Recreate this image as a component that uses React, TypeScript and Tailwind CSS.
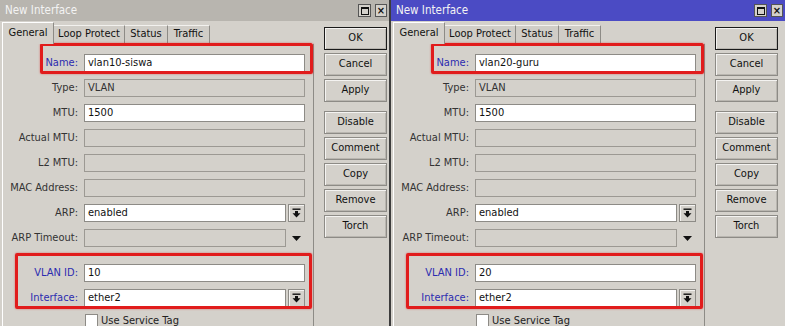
import React from 'react';

type Props = { active: boolean; name: string; vlan: string; className?: string };

const DropIcon = () => (
  <svg width="9" height="10" viewBox="0 0 9 10" aria-hidden="true">
    <rect x="0.5" y="0.5" width="8" height="1.4" fill="#111" />
    <path d="M3 3h3v2.2h2.5L4.5 9.5 0.5 5.2H3z" fill="#111" />
  </svg>
);

const Label: React.FC<{ text: string; blue?: boolean }> = ({ text, blue }) => (
  <div className={`w-[75px] shrink-0 text-right text-[11px] leading-[18px] ${blue ? 'text-[#2c2cb0]' : 'text-[#333333]'}`}>
    {text}
  </div>
);

const Box: React.FC<{ value?: string; disabled?: boolean; wide?: boolean }> = ({ value, disabled, wide }) => (
  <div
    className={`h-[18px] ${wide ? 'w-[221px]' : 'w-[202px]'} border px-[3px] text-[11px] leading-[16px] ${
      disabled ? 'border-[#9c9993] bg-[#d4d1cb] text-[#333333]' : 'border-[#8d8b86] bg-white text-[#111111]'
    }`}
  >
    {value}
  </div>
);

const DropBtn = () => (
  <div className="ml-[2px] flex h-[18px] w-[17px] items-center justify-center border border-[#8d8b86] bg-[#d4d1cb] shadow-[inset_1px_1px_0_#f4f3f1]">
    <DropIcon />
  </div>
);

const Row: React.FC<{ label: string; blue?: boolean; children: React.ReactNode; className?: string }> = ({
  label,
  blue,
  children,
  className = '',
}) => (
  <div className={`flex h-[18px] items-center ${className}`}>
    <Label text={label} blue={blue} />
    <div className="ml-[6px] flex items-center">{children}</div>
  </div>
);

const buttons = ['OK', 'Cancel', 'Apply', 'Disable', 'Comment', 'Copy', 'Remove', 'Torch'];

const Window: React.FC<Props> = ({ active, name, vlan, className = '' }) => (
  <div className={`relative h-[326px] shrink-0 overflow-hidden bg-[#d4d1cb] font-['DejaVu_Sans_Condensed','DejaVu_Sans',sans-serif] ${className}`}>
    {/* title bar */}
    <div className={`flex h-[21px] items-center justify-between pl-[5px] pr-[2px] ${active ? 'bg-[#4b4bc4]' : 'bg-[#b8b5af]'}`}>
      <span className="text-[11.5px] leading-[21px] text-[#f3f3f3]">New Interface</span>
      <div className="flex gap-[4px]">
        <div className="flex h-[13px] w-[13px] items-center justify-center border border-[#555] bg-[#d4d1cb]">
          <div className="h-[8px] w-[8px] border border-[#111] border-t-2" />
        </div>
        <div className="flex h-[13px] w-[12px] items-center justify-center border border-[#555] bg-[#d4d1cb] text-[11px] font-bold leading-none text-[#111]">
          ×
        </div>
      </div>
    </div>

    <div className="flex">
      <div className="ml-[2px] w-[312px]">
        {/* tabs */}
        <div className="mt-px flex h-[21px] items-end text-[11px] text-[#111]">
          <div className="relative z-10 -mb-px flex h-[22px] w-[52px] items-center justify-center border-l border-t border-r border-l-white border-t-white border-r-[#8d8b86] bg-[#d4d1cb]">
            General
          </div>
          <div className="flex h-[18px] w-[71px] items-center justify-center border-t border-r border-t-[#f2f1ee] border-r-[#8d8b86] bg-[#d0cdc7]">
            Loop Protect
          </div>
          <div className="flex h-[18px] w-[43px] items-center justify-center border-t border-r border-t-[#f2f1ee] border-r-[#8d8b86] bg-[#d0cdc7]">
            Status
          </div>
          <div className="flex h-[18px] w-[42px] items-center justify-center border-t border-r border-t-[#f2f1ee] border-r-[#8d8b86] bg-[#d0cdc7]">
            Traffic
          </div>
        </div>
        {/* panel */}
        <div className="h-[300px] border-l border-t border-r border-l-white border-t-white border-r-[#8d8b86] pt-[10px]">
          <div className="flex flex-col gap-[7px]">
            <Row label="Name:" blue>
              <Box value={name} wide />
            </Row>
            <Row label="Type:">
              <Box value="VLAN" disabled wide />
            </Row>
            <Row label="MTU:">
              <Box value="1500" wide />
            </Row>
            <Row label="Actual MTU:">
              <Box disabled wide />
            </Row>
            <Row label="L2 MTU:">
              <Box disabled wide />
            </Row>
            <Row label="MAC Address:">
              <Box disabled wide />
            </Row>
            <Row label="ARP:">
              <Box value="enabled" />
              <DropBtn />
            </Row>
            <Row label="ARP Timeout:">
              <Box disabled />
              <svg width="17" height="18" viewBox="0 0 17 18" className="ml-[2px]" aria-hidden="true">
                <path d="M4 7h9l-4.5 5z" fill="#111" />
              </svg>
            </Row>
            <Row label="VLAN ID:" blue className="mt-[10px]">
              <Box value={vlan} wide />
            </Row>
            <Row label="Interface:" blue>
              <Box value="ether2" />
              <DropBtn />
            </Row>
            <div className="ml-[82px] flex items-center">
              <div className="h-[13px] w-[13px] border border-[#8d8b86] bg-white" />
              <span className="ml-[3px] text-[11px] leading-[13px] text-[#222]">Use Service Tag</span>
            </div>
          </div>
        </div>
      </div>

      {/* buttons */}
      <div className="ml-[10px] mt-[6px] flex w-[63px] flex-col">
        {buttons.map((b, i) => (
          <div
            key={b}
            className={`flex h-[23px] items-center justify-center border text-[11px] text-[#111] shadow-[inset_1px_1px_0_#f4f3f1,inset_-1px_-1px_0_#b9b6b0] ${
              b === 'OK' ? 'border-[#1a1a1a]' : 'border-[#8d8b86]'
            } ${i === 0 ? '' : i === 3 ? 'mt-[9px]' : 'mt-[3px]'}`}
          >
            {b}
          </div>
        ))}
      </div>
    </div>

    {/* annotation boxes */}
    <div className="pointer-events-none absolute left-[40px] top-[43px] h-[31px] w-[273px] rounded-[2px] border-[3px] border-[#e11c1c] shadow-[0_0_2px_rgba(225,28,28,0.6)]" />
    <div className="pointer-events-none absolute left-[15px] top-[253px] h-[56px] w-[297px] rounded-[2px] border-[3px] border-[#e11c1c] shadow-[0_0_2px_rgba(225,28,28,0.6)]" />
  </div>
);

export default function App() {
  return (
    <div className="flex h-[326px] w-[785px] overflow-hidden bg-[#d4d1cb]">
      <Window active={false} name="vlan10-siswa" vlan="10" className="w-[391px] border-r-2 border-[#3c3c3c]" />
      <Window active name="vlan20-guru" vlan="20" className="w-[394px]" />
    </div>
  );
}
